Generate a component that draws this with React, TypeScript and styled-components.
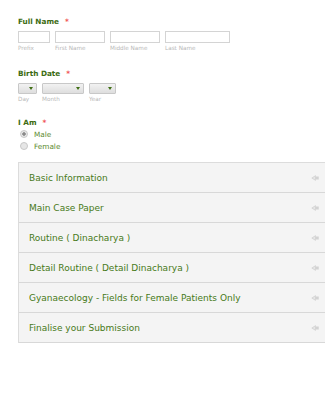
import React from "react";
import styled, { createGlobalStyle } from "styled-components";

const Global = createGlobalStyle`
  html, body { margin: 0; padding: 0; background: #fff; overflow: hidden; }
  body { font-family: "DejaVu Sans", Verdana, sans-serif; }
`;

const Page = styled.div`
  padding: 17px 0 0 18px;
  width: 325px;
  box-sizing: border-box;
`;

const Field = styled.div<{ $mb: number }>`
  margin-bottom: ${(p) => p.$mb}px;
`;

const Label = styled.div<{ $mb?: number }>`
  font-size: 7.3px;
  line-height: 9px;
  font-weight: bold;
  color: #3c6c12;
  display: flex;
  gap: 6px;
  margin-bottom: ${(p) => p.$mb ?? 5}px;
`;

const Star = styled.span`
  color: #f05050;
  font-weight: bold;
`;

const Row = styled.div`
  display: flex;
  gap: 5px;
`;

const Col = styled.div`
  display: flex;
  flex-direction: column;
`;

const TextBox = styled.div<{ $w: number }>`
  width: ${(p) => p.$w}px;
  height: 12px;
  box-sizing: border-box;
  border: 1px solid #d4d4d4;
  background: #fff;
`;

const Sub = styled.div`
  font-size: 5.7px;
  line-height: 8px;
  color: #b8b8b8;
  margin-top: 1px;
`;

const Select = styled.div<{ $w: number }>`
  width: ${(p) => p.$w}px;
  height: 11px;
  box-sizing: border-box;
  border: 1px solid #c8c8c8;
  border-radius: 1px;
  background: linear-gradient(#f2f2f2, #dedede);
  position: relative;
  &::after {
    content: "";
    position: absolute;
    right: 3px;
    top: 3px;
    border-left: 2.5px solid transparent;
    border-right: 2.5px solid transparent;
    border-top: 3px solid #3f6e14;
  }
`;

const Radio = styled.div`
  display: flex;
  align-items: center;
  height: 12px;
  padding-left: 2px;
  font-size: 7.3px;
  color: #5b8a2e;
`;

const Dot = styled.span<{ $on?: boolean }>`
  width: 6px;
  height: 6px;
  border-radius: 50%;
  border: 1px solid #c8c8c8;
  background: ${(p) => (p.$on ? "radial-gradient(#8a8a8a 35%, #e8e8e8 45%)" : "#e6e6e6")};
  margin-right: 6px;
`;

const Accordion = styled.div`
  width: 320px;
  border: 1px solid #dcdcdc;
  border-right: none;
  border-bottom: none;
  box-sizing: border-box;
`;

const Section = styled.div`
  height: 30px;
  box-sizing: border-box;
  border-bottom: 1px solid #d8d8d8;
  background: #f4f4f4;
  display: flex;
  align-items: center;
  justify-content: space-between;
  padding: 0 0 0 10px;
  font-size: 9px;
  color: #477a18;
`;

const Icon = styled.svg`
  margin-right: 19px;
  margin-top: 1px;
`;

const sections = [
  "Basic Information",
  "Main Case Paper",
  "Routine ( Dinacharya )",
  "Detail Routine ( Detail Dinacharya )",
  "Gyanaecology - Fields for Female Patients Only",
  "Finalise your Submission",
];

export default function App() {
  return (
    <Page>
      <Global />
      <Field $mb={17}>
        <Label>
          Full Name <Star>*</Star>
        </Label>
        <Row>
          <Col>
            <TextBox $w={32} />
            <Sub>Prefix</Sub>
          </Col>
          <Col>
            <TextBox $w={50} />
            <Sub>First Name</Sub>
          </Col>
          <Col>
            <TextBox $w={50} />
            <Sub>Middle Name</Sub>
          </Col>
          <Col>
            <TextBox $w={65} />
            <Sub>Last Name</Sub>
          </Col>
        </Row>
      </Field>
      <Field $mb={15}>
        <Label>
          Birth Date <Star>*</Star>
        </Label>
        <Row>
          <Col>
            <Select $w={19} />
            <Sub>Day</Sub>
          </Col>
          <Col>
            <Select $w={42} />
            <Sub>Month</Sub>
          </Col>
          <Col>
            <Select $w={27} />
            <Sub>Year</Sub>
          </Col>
        </Row>
      </Field>
      <Field $mb={10}>
        <Label $mb={1}>
          I Am <Star>*</Star>
        </Label>
        <Radio>
          <Dot $on />
          Male
        </Radio>
        <Radio>
          <Dot />
          Female
        </Radio>
      </Field>
      <Accordion>
        {sections.map((s) => (
          <Section key={s}>
            {s}
            <Icon width="8" height="6" viewBox="0 0 10 8">
              <polygon points="0,4 6,0 6,2 10,2 10,6 6,6 6,8" fill="#d2d2d2" />
              <polygon points="1.8,4 5.2,1.6 5.2,6.4" fill="#e6e6e6" />
            </Icon>
          </Section>
        ))}
      </Accordion>
    </Page>
  );
}
